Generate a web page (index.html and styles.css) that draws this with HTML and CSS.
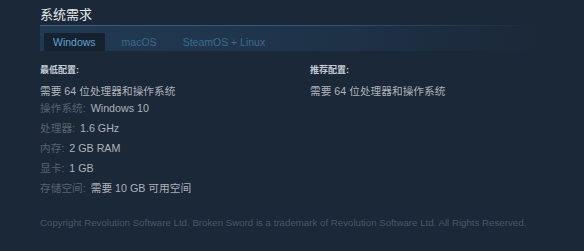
FILE: index.html
```html
<!DOCTYPE html>
<html lang="zh-CN">
<head>
    <meta charset="UTF-8">
    <meta name="viewport" content="width=device-width, initial-scale=1.0">
    <title>系统需求</title>
    <link rel="stylesheet" href="styles.css">
</head>
<body>

    <div class="sysreq">
        <h2>系统需求</h2>
        <div class="rule"></div>
        <div class="tabs">
            <span class="tab active">Windows</span>
            <span class="tab">macOS</span>
            <span class="tab">SteamOS + Linux</span>
        </div>

        <div class="reqs">
            <div class="col">
                <p class="reqs-title">最低配置:</p>
                <ul>
                    <li class="first">需要 64 位处理器和操作系统</li>
                    <li><span class="label">操作系统:</span> Windows 10</li>
                    <li><span class="label">处理器:</span> 1.6 GHz</li>
                    <li><span class="label">内存:</span> 2 GB RAM</li>
                    <li><span class="label">显卡:</span> 1 GB</li>
                    <li><span class="label">存储空间:</span> 需要 10 GB 可用空间</li>
                </ul>
            </div>
            <div class="col">
                <p class="reqs-title">推荐配置:</p>
                <ul>
                    <li class="first">需要 64 位处理器和操作系统</li>
                </ul>
            </div>
        </div>

        <p class="legal">Copyright Revolution Software Ltd. Broken Sword is a trademark of Revolution Software Ltd. All Rights Reserved.</p>
    </div>

</body>
</html>
```

FILE: styles.css
```css
body { margin: 0; padding: 0; background-color: #1b2838; font-family: "Liberation Sans", Arial, "Noto Sans CJK SC", sans-serif; }
.sysreq { width: 500px; padding: 6px 0 0 40px; }
h2 { margin: 0; height: 19px; font-size: 13px; line-height: 17px; font-weight: normal; color: #e5e8eb; }
.rule { height: 1px; background: linear-gradient(90deg, #3b6283 0%, #34536f 60%, rgba(27,40,56,0) 100%); }
.tabs { display: flex; gap: 8px; height: 18px; padding: 7px 0 0 4px; background: linear-gradient(90deg, #203a53 0%, #1f344a 50%, rgba(27,40,56,0) 100%); }
.tab { padding: 0 9px; font-size: 10.5px; line-height: 18px; color: #3b6a8e; }
.tab.active { background: #172231; color: #5aa2d1; }
.reqs { display: grid; grid-template-columns: 270px 1fr; margin-top: 13px; }
.reqs-title { margin: 0 0 7px; font-size: 9px; line-height: 12px; font-weight: bold; color: #c3ccd4; }
ul { list-style: none; margin: 0; padding: 0; }
li { font-size: 10.7px; line-height: 17px; margin-bottom: 3px; color: #acb2b8; }
li.first { margin-bottom: 0; }
.label { margin-right: 2px; color: #58626d; }
.legal { margin: 17px 0 0; font-size: 9.7px; line-height: 12px; color: #4a5767; white-space: nowrap; }
```
